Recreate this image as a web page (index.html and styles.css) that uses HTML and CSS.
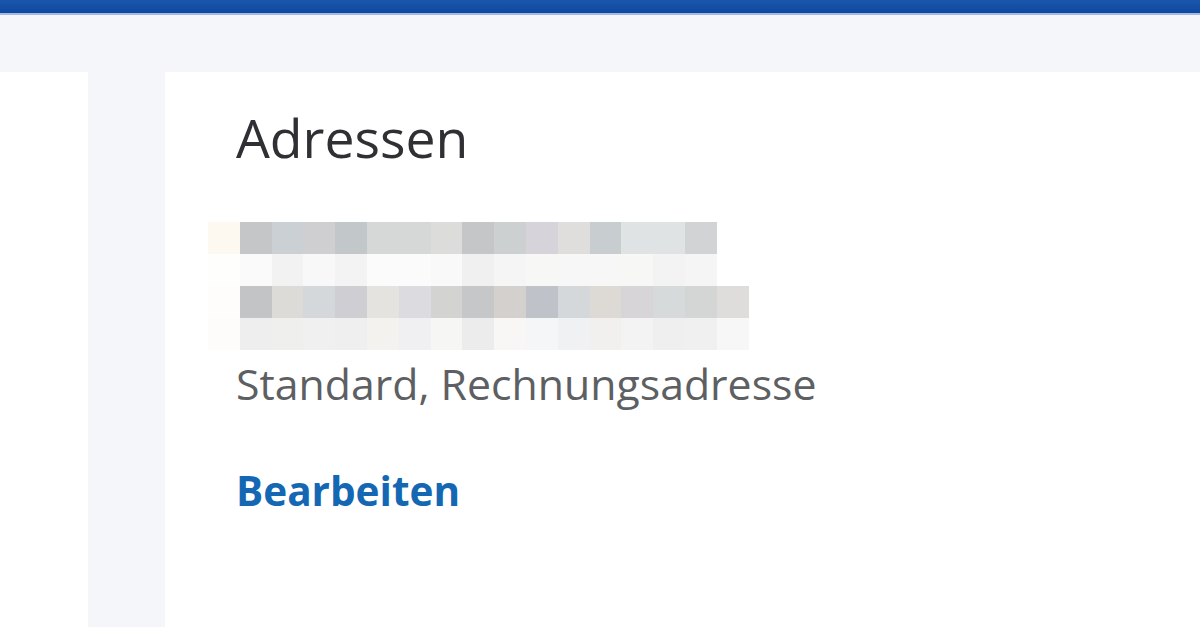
FILE: index.html
```html
<!DOCTYPE html>
<html lang="de">
<head>
    <meta charset="UTF-8">
    <meta name="viewport" content="width=device-width, initial-scale=1.0">
    <title>Adressen</title>
    <link rel="stylesheet" href="styles.css">
</head>
<body>
    <div class="topbar"></div>

    <div class="layout">
        <aside class="sidebar"></aside>

        <main class="card">
            <h1 class="card-title">Adressen</h1>

            <!-- Address (pixelated) -->
            <div class="address" id="address"></div>

            <p class="address-type">Standard, Rechnungsadresse</p>

            <a class="edit-link" href="#">Bearbeiten</a>
        </main>
    </div>

    <script>
        const addressRows = [
            ['#c4c6c8', '#cbd0d4', '#cfcfd1', '#c2c7c9', '#d6d8d8', '#d6d8d8', '#dcdcda', '#c4c6c8', '#ccd0d1', '#d6d4da', '#e0dedc', '#c8cdd0', '#e0e3e4', '#e0e3e4', '#d2d3d5'],
            ['#fafafa', '#f2f2f2', '#f8f8f8', '#f3f3f3', '#fbfbfb', '#fbfbfb', '#f9f9f9', '#f0f0f0', '#f5f5f5', '#f7f7f5', '#f7f7f7', '#f7f7f7', '#f7f7f5', '#f3f3f3', '#f5f5f5'],
            ['#c3c4c6', '#dddbd8', '#d5d8da', '#cfcfd3', '#e4e3e0', '#dcdbe0', '#d3d4d1', '#c6c7c9', '#d3d0cd', '#bfc3c9', '#d5d8db', '#ddd9d5', '#d8d5d8', '#d7dadb', '#d3d6d4', '#dfdcdc'],
            ['#eeeeee', '#efefee', '#f0f0f0', '#efefef', '#f3f2ef', '#f0eff2', '#f6f6f4', '#ececec', '#f8f7f5', '#f5f6f8', '#f0f1f3', '#f1f0ee', '#f3f3f3', '#efefef', '#f0f0f0', '#f7f7f7']
        ];
        const leadColors = ['#fdf8f0', '#fefefd', '#fefdfb', '#fdfcfa'];

        const address = document.getElementById('address');

        addressRows.forEach((colors, i) => {
            const row = document.createElement('div');
            row.className = 'pixel-row';

            const lead = document.createElement('span');
            lead.className = 'pixel';
            lead.style.background = leadColors[i];
            row.appendChild(lead);

            colors.forEach(color => {
                const cell = document.createElement('span');
                cell.className = 'pixel';
                cell.style.background = color;
                row.appendChild(cell);
            });

            address.appendChild(row);
        });
    </script>
</body>
</html>
```

FILE: styles.css
```css
body {
    margin: 0;
    background-color: #f4f6fa;
    font-family: "Open Sans", "Noto Sans", sans-serif;
}

.topbar {
    height: 13px;
    background: linear-gradient(#1a57ab, #0f47a0);
    border-bottom: 2px solid #a3bbe0;
}

.layout {
    display: flex;
    gap: 77px;
    padding-top: 57px;
}

.sidebar {
    width: 88px;
    background-color: #fff;
}

.card {
    flex: 1;
    box-sizing: border-box;
    min-height: 555px;
    background-color: #fff;
    padding: 39px 0 0 71px;
}

.card-title {
    margin: 0;
    font-size: 53.5px;
    font-weight: 400;
    line-height: 1;
    color: #2e3034;
}

.address {
    margin: 57px 0 0 -28px;
}

.pixel-row {
    display: flex;
    height: 32px;
}

.pixel {
    width: 31.8px;
    height: 32px;
}

.address-type {
    margin: 13px 0 0;
    font-size: 42.8px;
    line-height: 1;
    color: #5d5f62;
}

.edit-link {
    display: inline-block;
    margin-top: 66px;
    font-size: 40.5px;
    font-weight: 700;
    line-height: 1;
    color: #1467b3;
    text-decoration: none;
}
```
